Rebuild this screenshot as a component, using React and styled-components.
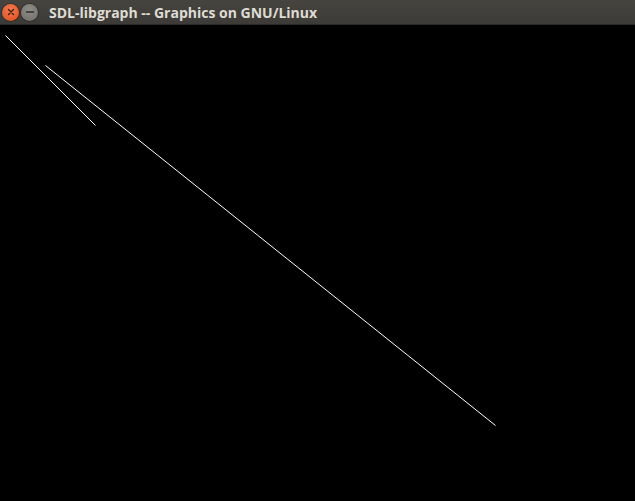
import React from 'react'
import styled, { createGlobalStyle } from 'styled-components'

const Global = createGlobalStyle`
  html, body { margin: 0; padding: 0; background: #000; }
  #root { width: 635px; height: 501px; }
`;

const lines = [
    { x1: 5.5, y1: 35.5, x2: 95.5, y2: 125.5 },
    { x1: 45.5, y1: 65.5, x2: 495.5, y2: 425.5 },
];

export default function App() {
    return (
        <>
            <Global />
            <Window>
                <TitleBar>
                    <Controls>
                        <WinButton $kind="close">
                            <svg width="8" height="8" viewBox="0 0 8 8">
                                <path d="M1.5 1.5 L6.5 6.5 M6.5 1.5 L1.5 6.5" stroke="#3a1a0c" strokeWidth="1.3" strokeLinecap="round" />
                            </svg>
                        </WinButton>
                        <WinButton $kind="min">
                            <svg width="10" height="8" viewBox="0 0 10 8">
                                <path d="M1.5 4 L8.5 4" stroke="#2f2e2b" strokeWidth="1.4" strokeLinecap="round" />
                            </svg>
                        </WinButton>
                    </Controls>
                    <Title>SDL-libgraph -- Graphics on GNU/Linux</Title>
                </TitleBar>
                <Canvas>
                    <svg width="635" height="476" viewBox="0 25 635 476">
                        {lines.map((l, i) => (
                            <line key={i} {...l} stroke="#fff" strokeWidth="1" />
                        ))}
                    </svg>
                </Canvas>
            </Window>
        </>
    )
}

const Window = styled.div`
  width: 635px;
  height: 501px;
  display: flex;
  flex-direction: column;
  background: #000;
  overflow: hidden;
`;

const TitleBar = styled.div`
  height: 25px;
  flex: none;
  display: flex;
  align-items: center;
  padding-left: 2px;
  gap: 11px;
  background: linear-gradient(#45443f, #3c3b37);
  border-bottom: 1px solid #2b2a27;
  box-sizing: border-box;
`;

const Controls = styled.div`
  display: flex;
  align-items: center;
  gap: 2px;
`;

const WinButton = styled.div`
  width: 17px;
  height: 17px;
  border-radius: 50%;
  display: flex;
  align-items: center;
  justify-content: center;
  background: ${p => p.$kind === 'close'
        ? 'radial-gradient(circle at 50% 35%, #f37b4f, #e2491c)'
        : 'radial-gradient(circle at 50% 35%, #8e8d88, #6e6d68)'};
  box-shadow: 0 0 0 1px rgba(0,0,0,0.25);
`;

const Title = styled.div`
  font-family: "Open Sans", "DejaVu Sans", sans-serif;
  font-weight: 700;
  font-size: 14px;
  color: #dfdbd2;
  white-space: nowrap;
`;

const Canvas = styled.div`
  flex: 1;
  background: #000;
  svg { display: block; }
`;
